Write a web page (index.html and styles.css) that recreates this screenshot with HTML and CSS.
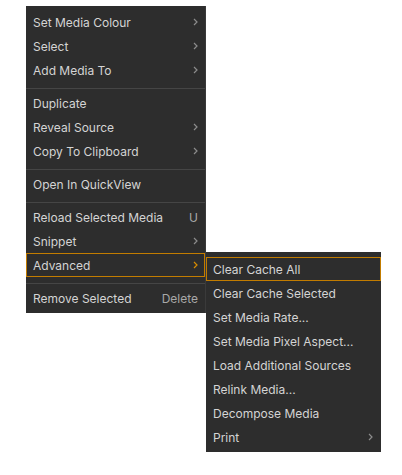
FILE: index.html
```html
<!DOCTYPE html>
<html>
<head>
<meta charset="utf-8">
<link rel="stylesheet" href="styles.css">
</head>
<body>
<div class="stage">
  <div class="menu main">
    <div class="item"><span class="label">Set Media Colour</span><span class="chev"><svg width="5" height="8" viewBox="0 0 5 8"><path d="M1 1 L4 4 L1 7" fill="none" stroke="currentColor" stroke-width="1.2"/></svg></span></div>
    <div class="item"><span class="label">Select</span><span class="chev"><svg width="5" height="8" viewBox="0 0 5 8"><path d="M1 1 L4 4 L1 7" fill="none" stroke="currentColor" stroke-width="1.2"/></svg></span></div>
    <div class="item"><span class="label">Add Media To</span><span class="chev"><svg width="5" height="8" viewBox="0 0 5 8"><path d="M1 1 L4 4 L1 7" fill="none" stroke="currentColor" stroke-width="1.2"/></svg></span></div>
    <div class="sep"></div>
    <div class="item"><span class="label">Duplicate</span></div>
    <div class="item"><span class="label">Reveal Source</span><span class="chev"><svg width="5" height="8" viewBox="0 0 5 8"><path d="M1 1 L4 4 L1 7" fill="none" stroke="currentColor" stroke-width="1.2"/></svg></span></div>
    <div class="item"><span class="label">Copy To Clipboard</span><span class="chev"><svg width="5" height="8" viewBox="0 0 5 8"><path d="M1 1 L4 4 L1 7" fill="none" stroke="currentColor" stroke-width="1.2"/></svg></span></div>
    <div class="sep"></div>
    <div class="item"><span class="label">Open In QuickView</span></div>
    <div class="sep"></div>
    <div class="item"><span class="label">Reload Selected Media</span><span class="key">U</span></div>
    <div class="item"><span class="label">Snippet</span><span class="chev"><svg width="5" height="8" viewBox="0 0 5 8"><path d="M1 1 L4 4 L1 7" fill="none" stroke="currentColor" stroke-width="1.2"/></svg></span></div>
    <div class="item active"><span class="label">Advanced</span><span class="chev"><svg width="5" height="8" viewBox="0 0 5 8"><path d="M1 1 L4 4 L1 7" fill="none" stroke="currentColor" stroke-width="1.2"/></svg></span></div>
    <div class="sep"></div>
    <div class="item"><span class="label">Remove Selected</span><span class="key">Delete</span></div>
  </div>
  <div class="menu sub">
    <div class="item active"><span class="label">Clear Cache All</span></div>
    <div class="item"><span class="label">Clear Cache Selected</span></div>
    <div class="item"><span class="label">Set Media Rate...</span></div>
    <div class="item"><span class="label">Set Media Pixel Aspect...</span></div>
    <div class="item"><span class="label">Load Additional Sources</span></div>
    <div class="item"><span class="label">Relink Media...</span></div>
    <div class="item"><span class="label">Decompose Media</span></div>
    <div class="item"><span class="label">Print</span><span class="chev"><svg width="5" height="8" viewBox="0 0 5 8"><path d="M1 1 L4 4 L1 7" fill="none" stroke="currentColor" stroke-width="1.2"/></svg></span></div>
  </div>
</div>
</body>
</html>
```
FILE: styles.css
```css
html, body {
  margin: 0;
  padding: 0;
  background: #ffffff;
}
body {
  font-family: Inter, "Noto Sans", sans-serif;
  font-size: 12px;
  color: #d4d4d4;
}
.stage {
  display: flex;
  align-items: flex-start;
  padding: 6px 0 0 26px;
  min-height: 469px;
}
.menu {
  background: #2d2d2d;
  box-sizing: border-box;
  display: flex;
  flex-direction: column;
  flex: none;
}
.main {
  width: 180px;
  padding: 4px 0 3px 0;
  border-right: 1px solid #3a3a3a;
}
.sub {
  width: 175px;
  margin-top: 246px;
  padding: 5px 0 3px 0;
}
.item {
  height: 24px;
  box-sizing: border-box;
  display: flex;
  align-items: center;
  justify-content: space-between;
  padding: 0 8px 0 7px;
}
.main .item {
  padding-right: 7px;
}
.item.active {
  border: 1px solid #c27c00;
  padding-left: 6px;
  padding-right: 6px;
}
.item.active .chev {
  color: #d88c00;
}
.chev {
  color: #8c8c8c;
  display: flex;
  align-items: center;
}
.key {
  color: #a8a8a8;
}
.sep {
  height: 1px;
  background: #454545;
  margin: 6px 0 2px 0;
}
```
